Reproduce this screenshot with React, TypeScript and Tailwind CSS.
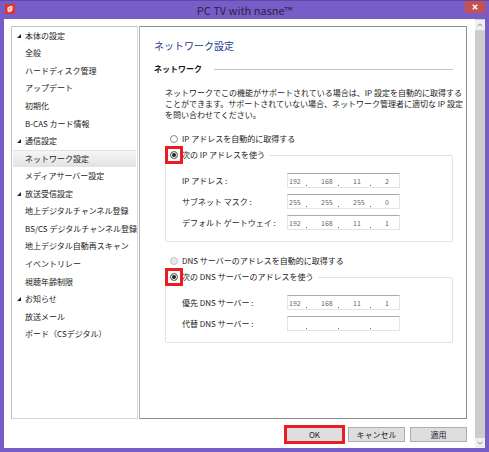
import type { ReactNode } from "react";
import clsx from "clsx";

const menu = [
  {
    title: "本体の設定",
    items: ["全般", "ハードディスク管理", "アップデート", "初期化", "B-CAS カード情報"],
  },
  {
    title: "通信設定",
    items: ["ネットワーク設定", "メディアサーバー設定"],
  },
  {
    title: "放送受信設定",
    items: [
      "地上デジタルチャンネル登録",
      "BS/CS デジタルチャンネル登録",
      "地上デジタル自動再スキャン",
      "イベントリレー",
      "視聴年齢制限",
    ],
  },
  {
    title: "お知らせ",
    items: ["放送メール", "ボード（CSデジタル）"],
  },
];

const current = "ネットワーク設定";

function TitleBar() {
  return (
    <header className="relative flex h-[19px] shrink-0 items-center justify-center border-t border-[#5f49a8] bg-[#775dc8]">
      <svg viewBox="0 0 10 10" className="absolute top-[3px] left-[5px] size-[10px]">
        <rect width="10" height="10" rx="1" fill="#e0322b" />
        <path d="M2.2 3.8 5.4 1.8 8 2.4 7.2 6.8 4.4 8.6 2.6 7.4Z" fill="#f6dcd8" />
        <path d="M2.4 3.9 4.8 4.6 4.4 8.4M4.8 4.6 7.8 2.6" stroke="#d8685f" strokeWidth=".4" fill="none" />
      </svg>
      <h1 className="text-[11px] leading-none text-[#2b2440]">PC TV with nasne™</h1>
      <button
        type="button"
        aria-label="閉じる"
        className="absolute top-0 right-1 flex h-3 w-5 items-center justify-center bg-[#c75050]"
      >
        <svg viewBox="0 0 6 6" className="size-[6px]">
          <path d="M.8.8 5.2 5.2M5.2.8.8 5.2" stroke="#fff" strokeWidth="1.5" />
        </svg>
      </button>
    </header>
  );
}

function Sidebar() {
  return (
    <nav className="w-[127px] shrink-0 border border-[#c3c3c3] border-r-[#dcdcdc] border-b-[#d4d4d4] px-px">
      <ul className="grid h-[316px] auto-rows-fr text-[8px]">
        {menu.map((group) => (
          <li key={group.title} className="contents">
            <div className="flex items-center pl-1">
              <svg viewBox="0 0 5 5" className="mr-1 size-[4px]">
                <path d="M5 0V5H0Z" fill="#222" />
              </svg>
              {group.title}
            </div>
            {group.items.map((item) => (
              <a
                key={item}
                href="#"
                className={clsx(
                  "flex min-w-0 items-center pl-3 whitespace-nowrap",
                  item === current && "border-t border-[#e2e2e2] bg-linear-to-b from-[#f6f6f6] to-[#e2e2e2]"
                )}
              >
                {item}
              </a>
            ))}
          </li>
        ))}
      </ul>
    </nav>
  );
}

type RadioProps = {
  name: string;
  checked?: boolean;
  disabled?: boolean;
  marked?: boolean;
  children: ReactNode;
};

function Radio({ name, checked, disabled, marked, children }: RadioProps) {
  return (
    <label className="relative flex h-4 items-center gap-1 text-[8px] whitespace-nowrap">
      <input
        type="radio"
        name={name}
        defaultChecked={checked}
        disabled={disabled}
        className="size-2 appearance-none rounded-full border border-[#8a8a8a] bg-white checked:border-[#777] checked:bg-[#222] checked:shadow-[inset_0_0_0_1px_#fff] disabled:border-[#c4c4c4] disabled:bg-[#e8e8e8]"
      />
      {children}
      {marked && <span className="absolute top-[-1px] left-[-5px] size-[18px] border-3 border-[#ec1c24]" />}
    </label>
  );
}

function AddressRow({ label, parts }: { label: string; parts: string[] }) {
  return (
    <div className="flex items-center text-[8px]">
      <span className="w-[105px] whitespace-nowrap">{label} :</span>
      <div
        role="group"
        aria-label={label}
        className="flex h-[15px] w-[113px] border border-[#e3e3e9] border-t-[#aaa] bg-white pl-px"
      >
        {parts.map((part, i) => (
          <span key={i} className="flex w-8 shrink-0 items-center last:w-3">
            <input
              type="text"
              aria-label={`${label} ${i + 1}`}
              defaultValue={part}
              className="h-3 w-[17px] min-w-0 text-[7px] text-[#666] outline-none"
            />
            {i < 3 && <span className="mb-px size-px self-end bg-[#777]" />}
          </span>
        ))}
      </div>
    </div>
  );
}

function AddressGroup({ legend, children }: { legend: ReactNode; children: ReactNode }) {
  return (
    <fieldset className="min-w-0 rounded-xs border border-[#dde3ea] pr-1 pb-[11px] pl-4">
      <legend className="-ml-3 pr-1">{legend}</legend>
      <div className="flex flex-col gap-[6px] pt-[10px]">{children}</div>
    </fieldset>
  );
}

function NetworkPanel() {
  return (
    <main className="min-w-0 flex-1 border border-[#8e8e8e] border-l-[#b5b5b5] pr-[13px] pl-[14px]">
      <h2 className="mt-3 text-[10px] leading-[14px] text-[#1b3a93]">ネットワーク設定</h2>
      <div className="mt-[10px] flex items-center gap-3">
        <h3 className="text-[8px] leading-3 font-bold">ネットワーク</h3>
        <hr className="flex-1 border-[#c4c4c4]" />
      </div>
      <div className="mt-3 pl-[11px]">
        <p className="text-[8px] leading-[11px] whitespace-nowrap">
          ネットワークでこの機能がサポートされている場合は、IP 設定を自動的に取得する
          <br />
          ことができます。サポートされていない場合、ネットワーク管理者に適切な IP 設定
          <br />
          を問い合わせてください。
        </p>
        <form className="mt-[11px]">
          <div className="pl-[5px]">
            <Radio name="ip">IP アドレスを自動的に取得する</Radio>
          </div>
          <AddressGroup
            legend={
              <Radio name="ip" checked marked>
                次の IP アドレスを使う
              </Radio>
            }
          >
            <AddressRow label="IP アドレス" parts={["192", "168", "11", "2"]} />
            <AddressRow label="サブネット マスク" parts={["255", "255", "255", "0"]} />
            <AddressRow label="デフォルト ゲートウェイ" parts={["192", "168", "11", "1"]} />
          </AddressGroup>
          <div className="mt-[11px] pl-[5px]">
            <Radio name="dns" disabled>
              DNS サーバーのアドレスを自動的に取得する
            </Radio>
          </div>
          <AddressGroup
            legend={
              <Radio name="dns" checked marked>
                次の DNS サーバーのアドレスを使う
              </Radio>
            }
          >
            <AddressRow label="優先 DNS サーバー" parts={["192", "168", "11", "1"]} />
            <AddressRow label="代替 DNS サーバー" parts={["", "", "", ""]} />
          </AddressGroup>
        </form>
      </div>
    </main>
  );
}

function DialogButton({ children, marked }: { children: ReactNode; marked?: boolean }) {
  return (
    <button
      type="button"
      className={clsx(
        "h-[15px] w-[57px] border border-[#adadad] bg-[#dedede] text-[8px] leading-none",
        marked && "outline-3 -outline-offset-1 outline-[#ec1c24]"
      )}
    >
      {children}
    </button>
  );
}

function ScrollBar() {
  return (
    <div className="flex w-[10px] shrink-0 flex-col bg-[#cdcdcd] pt-px">
      <button type="button" aria-label="上へスクロール" className="flex h-[10px] items-center justify-center bg-[#f0f0f0]">
        <svg viewBox="0 0 6 4" className="h-1 w-[6px]">
          <path d="M.6 3.2 3 .9 5.4 3.2" stroke="#888" fill="none" />
        </svg>
      </button>
      <div className="flex-1" />
      <button type="button" aria-label="下へスクロール" className="flex h-[10px] items-center justify-center bg-[#f0f0f0]">
        <svg viewBox="0 0 6 4" className="h-1 w-[6px]">
          <path d="M.6.8 3 3.1 5.4.8" stroke="#888" fill="none" />
        </svg>
      </button>
    </div>
  );
}

export default function App() {
  return (
    <div className="flex min-h-screen flex-col bg-[#775dc8] font-['Noto_Sans_CJK_JP',sans-serif] text-[#1a1a1a]">
      <TitleBar />
      <div className="mx-1 mb-1 flex flex-1 bg-white">
        <div className="flex min-w-0 flex-1 flex-col pt-[7px] pr-2 pl-[7px]">
          <div className="flex flex-1 gap-px">
            <Sidebar />
            <NetworkPanel />
          </div>
          <footer className="flex justify-end gap-[5px] pt-2 pb-[6px]">
            <DialogButton marked>OK</DialogButton>
            <DialogButton>キャンセル</DialogButton>
            <DialogButton>適用</DialogButton>
          </footer>
        </div>
        <ScrollBar />
      </div>
    </div>
  );
}
